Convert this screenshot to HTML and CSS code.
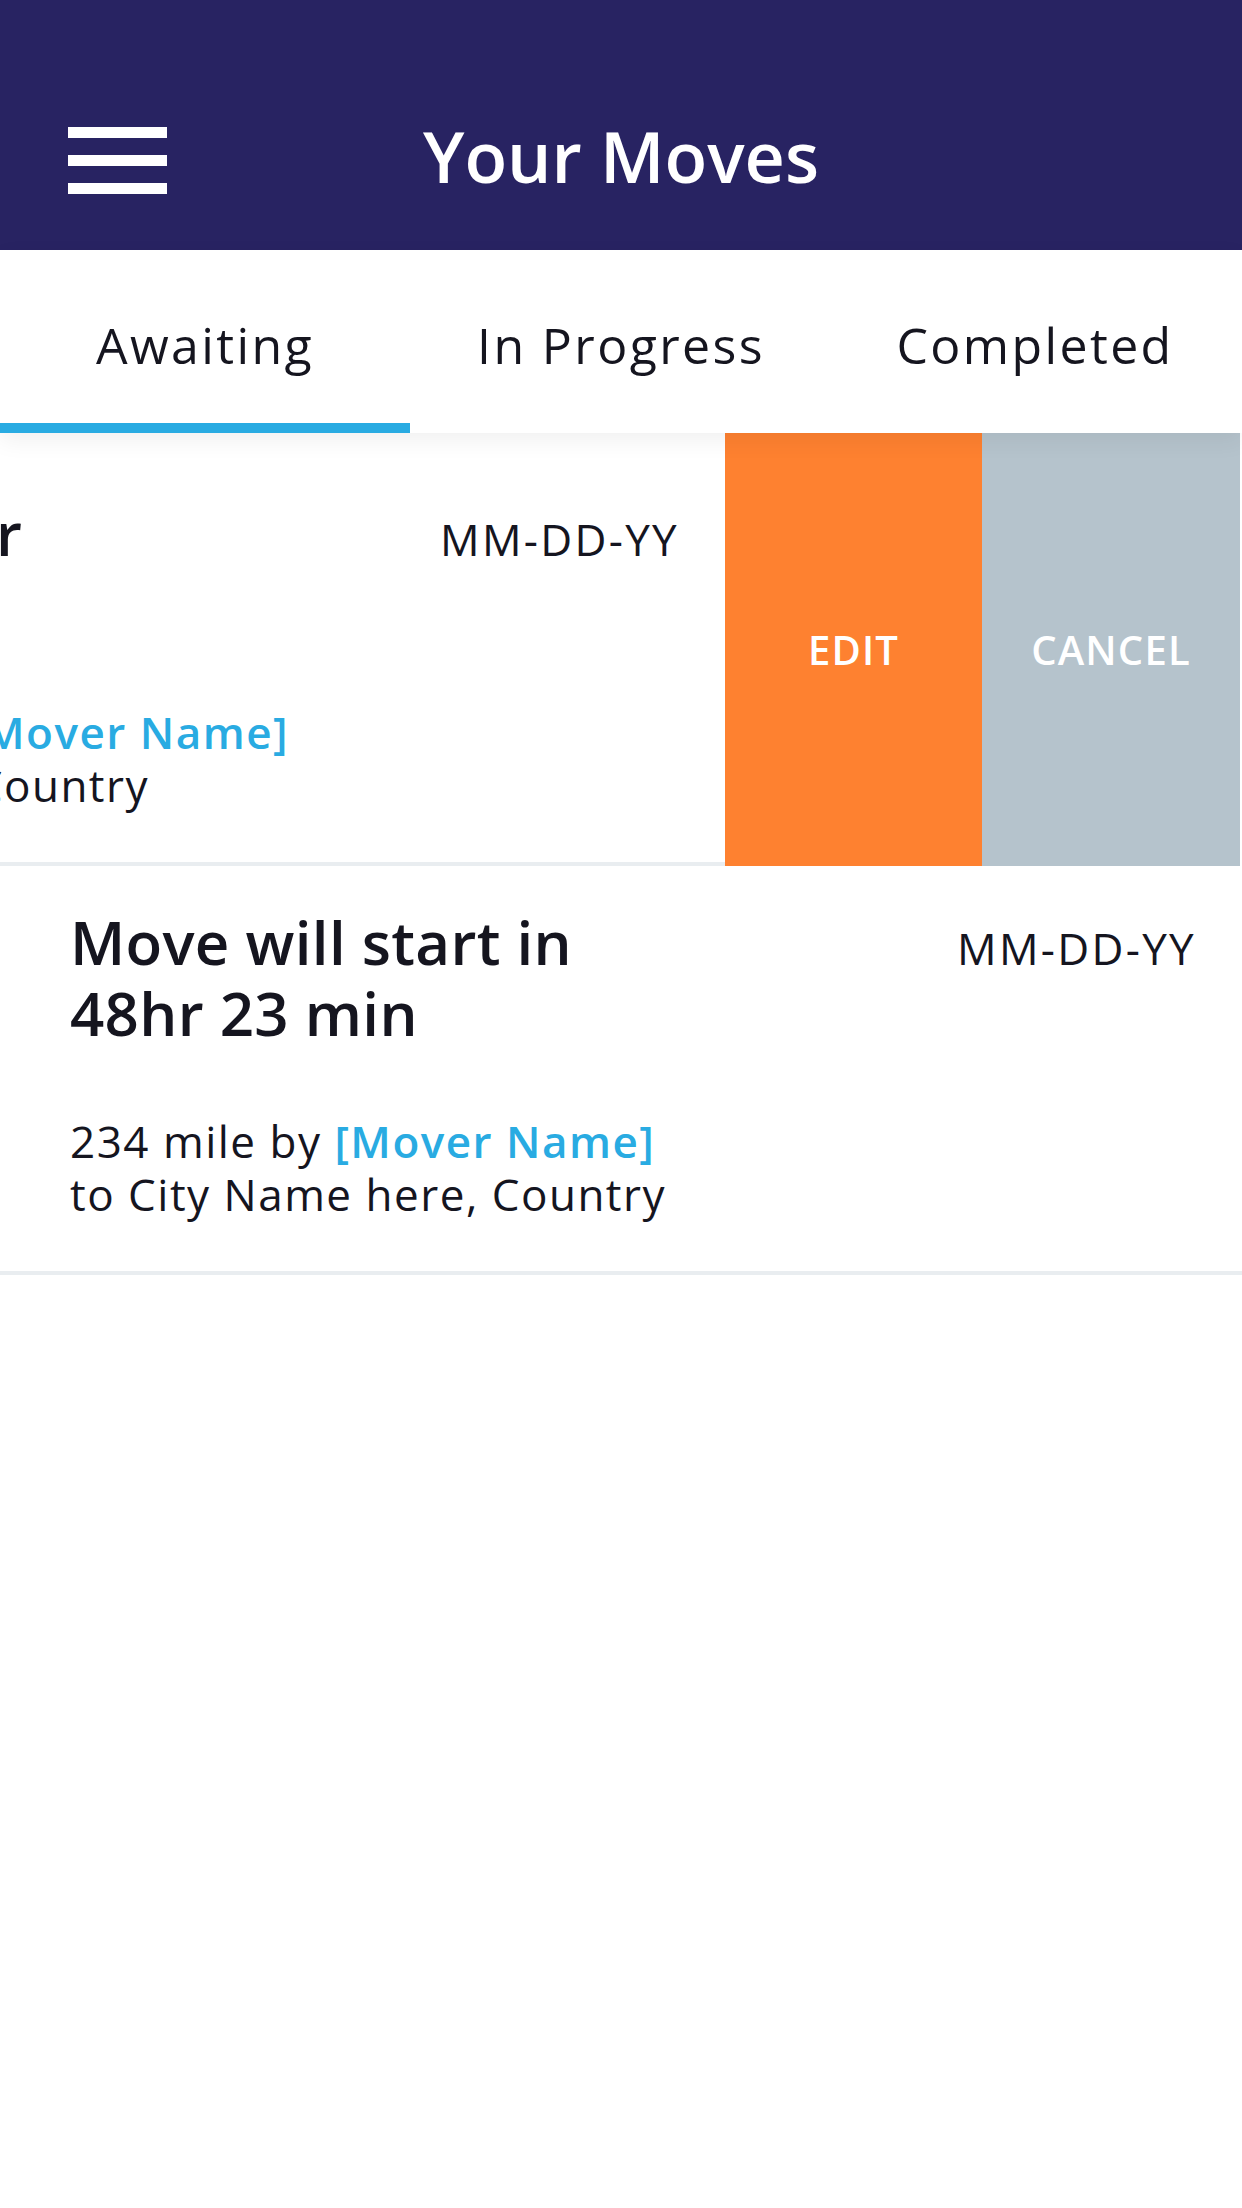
FILE: index.html
```html
<!DOCTYPE html>
<html lang="en">
<head>
<meta charset="utf-8">
<title>Your Moves</title>
<link rel="stylesheet" href="styles.css">
</head>
<body>
<div class="app">
  <header class="appbar">
    <div class="toolbar">
      <button class="menu-btn" aria-label="Menu">
        <span class="bar"></span><span class="bar"></span><span class="bar"></span>
      </button>
      <h1 class="title">Your Moves</h1>
      <div class="spacer"></div>
    </div>
  </header>

  <nav class="tabs">
    <div class="tab active">Awaiting</div>
    <div class="tab">In Progress</div>
    <div class="tab">Completed</div>
  </nav>

  <main class="list">
    <div class="row row-first">
      <div class="track swiped">
        <div class="card">
          <div class="card-head">
            <div class="card-title">Finding a mover nearby</div>
            <div class="card-date">MM-DD-YY</div>
          </div>
          <div class="card-body">
            <div>1234 mile away by <span class="mover">[Mover Name]</span></div>
            <div>to City Name here, Country</div>
          </div>
        </div>
        <div class="actions">
          <div class="action edit">EDIT</div>
          <div class="action cancel">CANCEL</div>
        </div>
      </div>
    </div>

    <div class="row">
      <div class="track">
        <div class="card">
          <div class="card-head">
            <div class="card-title">Move will start in 48hr 23 min</div>
            <div class="card-date">MM-DD-YY</div>
          </div>
          <div class="card-body">
            <div>234 mile by <span class="mover">[Mover Name]</span></div>
            <div>to City Name here, Country</div>
          </div>
        </div>
        <div class="actions">
          <div class="action edit">EDIT</div>
          <div class="action cancel">CANCEL</div>
        </div>
      </div>
    </div>
  </main>
</div>
</body>
</html>
```

FILE: styles.css
```css
* { box-sizing: border-box; }

html, body {
  margin: 0;
  padding: 0;
  background: #ffffff;
}

body {
  font-family: "Open Sans", "Liberation Sans", sans-serif;
  color: #15151f;
  width: 1242px;
  min-height: 2208px;
  overflow: hidden;
}

.appbar {
  background: #282362;
  padding-top: 70px;
}

.toolbar {
  height: 180px;
  display: grid;
  grid-template-columns: 1fr auto 1fr;
  align-items: center;
}

.menu-btn {
  justify-self: start;
  margin-left: 68px;
  width: 99px;
  height: 67px;
  padding: 0;
  border: 0;
  background: transparent;
  display: flex;
  flex-direction: column;
  justify-content: space-between;
}

.menu-btn .bar {
  display: block;
  width: 99px;
  height: 11px;
  background: #ffffff;
}

.title {
  margin: 0 0 8px;
  color: #ffffff;
  font-size: 70px;
  line-height: 70px;
  font-weight: 600;
  letter-spacing: 0;
}

.tabs {
  position: relative;
  z-index: 2;
  display: grid;
  grid-template-columns: repeat(3, 1fr);
  background: #ffffff;
  box-shadow: 0 8px 22px rgba(0, 0, 0, 0.06);
}

.tab {
  height: 183px;
  padding-top: 70px;
  text-align: center;
  font-size: 50px;
  line-height: 50px;
  font-weight: 400;
  letter-spacing: 2.4px;
  color: #15151f;
  border-bottom: 10px solid transparent;
}

.tab.active {
  border-bottom-color: #29abe2;
  margin-right: 4px;
}

.list {
  position: relative;
  z-index: 1;
}

.row {
  overflow: hidden;
  background: #ffffff;
}

.track {
  display: flex;
  width: 1242px;
}

.track.swiped {
  transform: translateX(-517px);
}

.card {
  flex: 0 0 1242px;
  padding: 41px 46px 50px 70px;
  border-bottom: 4px solid #e9edf0;
}

.row-first .card {
  padding-top: 65px;
}

.card-head {
  display: flex;
  align-items: baseline;
  justify-content: space-between;
}

.card-title {
  max-width: 560px;
  font-size: 60px;
  line-height: 71px;
  font-weight: 600;
  letter-spacing: 0.3px;
}

.card-date {
  font-size: 44px;
  line-height: 71px;
  font-weight: 400;
  letter-spacing: 2.3px;
}

.card-body {
  margin-top: 66px;
  font-size: 44px;
  line-height: 53px;
  font-weight: 400;
  letter-spacing: 1.5px;
}

.mover {
  color: #29abe2;
  font-weight: 600;
}

.actions {
  flex: 0 0 515px;
  display: flex;
}

.action {
  flex: 1 1 0;
  display: flex;
  align-items: center;
  justify-content: center;
  color: #ffffff;
  font-size: 40px;
  font-weight: 600;
  letter-spacing: 1.2px;
}

.action.edit {
  background: #fe8130;
  flex-basis: 257px;
}

.action.cancel {
  background: #b5c3cc;
  flex-basis: 258px;
}
```
